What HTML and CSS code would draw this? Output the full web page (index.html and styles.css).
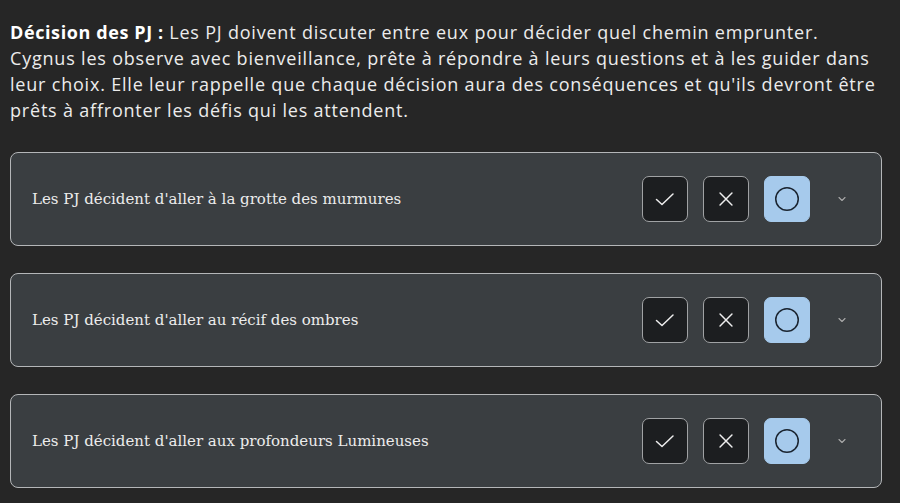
FILE: index.html
```html
<!DOCTYPE html>
<html lang="fr">
<head>
<meta charset="utf-8">
<link rel="stylesheet" href="styles.css">
</head>
<body>
<div class="page">
  <p class="intro"><strong>Décision des PJ :</strong> Les PJ doivent discuter entre eux pour décider quel chemin emprunter. Cygnus les observe avec bienveillance, prête à répondre à leurs questions et à les guider dans leur choix. Elle leur rappelle que chaque décision aura des conséquences et qu'ils devront être prêts à affronter les défis qui les attendent.</p>

  <div class="card">
    <span class="label">Les PJ décident d'aller à la grotte des murmures</span>
    <div class="actions">
      <button class="btn"><svg viewBox="0 0 24 24" width="24" height="24"><path d="M3.5 12.5l5.5 5 11-10.5" fill="none" stroke="#eee" stroke-width="1.5" stroke-linecap="round" stroke-linejoin="round"/></svg></button>
      <button class="btn"><svg viewBox="0 0 24 24" width="22" height="22"><path d="M5.5 5.5l13 13M18.5 5.5l-13 13" fill="none" stroke="#eee" stroke-width="1.6" stroke-linecap="round"/></svg></button>
      <button class="btn active"><svg viewBox="0 0 24 24" width="30" height="30"><circle cx="12" cy="12" r="9" fill="none" stroke="#1a2430" stroke-width="1.2"/></svg></button>
      <span class="chev"><svg viewBox="0 0 12 12" width="12" height="12"><path d="M3 4.5l3 3 3-3" fill="none" stroke="#aaa" stroke-width="1.1" stroke-linecap="round" stroke-linejoin="round"/></svg></span>
    </div>
  </div>

  <div class="card">
    <span class="label">Les PJ décident d'aller au récif des ombres</span>
    <div class="actions">
      <button class="btn"><svg viewBox="0 0 24 24" width="24" height="24"><path d="M3.5 12.5l5.5 5 11-10.5" fill="none" stroke="#eee" stroke-width="1.5" stroke-linecap="round" stroke-linejoin="round"/></svg></button>
      <button class="btn"><svg viewBox="0 0 24 24" width="22" height="22"><path d="M5.5 5.5l13 13M18.5 5.5l-13 13" fill="none" stroke="#eee" stroke-width="1.6" stroke-linecap="round"/></svg></button>
      <button class="btn active"><svg viewBox="0 0 24 24" width="30" height="30"><circle cx="12" cy="12" r="9" fill="none" stroke="#1a2430" stroke-width="1.2"/></svg></button>
      <span class="chev"><svg viewBox="0 0 12 12" width="12" height="12"><path d="M3 4.5l3 3 3-3" fill="none" stroke="#aaa" stroke-width="1.1" stroke-linecap="round" stroke-linejoin="round"/></svg></span>
    </div>
  </div>

  <div class="card">
    <span class="label">Les PJ décident d'aller aux profondeurs Lumineuses</span>
    <div class="actions">
      <button class="btn"><svg viewBox="0 0 24 24" width="24" height="24"><path d="M3.5 12.5l5.5 5 11-10.5" fill="none" stroke="#eee" stroke-width="1.5" stroke-linecap="round" stroke-linejoin="round"/></svg></button>
      <button class="btn"><svg viewBox="0 0 24 24" width="22" height="22"><path d="M5.5 5.5l13 13M18.5 5.5l-13 13" fill="none" stroke="#eee" stroke-width="1.6" stroke-linecap="round"/></svg></button>
      <button class="btn active"><svg viewBox="0 0 24 24" width="30" height="30"><circle cx="12" cy="12" r="9" fill="none" stroke="#1a2430" stroke-width="1.2"/></svg></button>
      <span class="chev"><svg viewBox="0 0 12 12" width="12" height="12"><path d="M3 4.5l3 3 3-3" fill="none" stroke="#aaa" stroke-width="1.1" stroke-linecap="round" stroke-linejoin="round"/></svg></span>
    </div>
  </div>
</div>
</body>
</html>
```

FILE: styles.css
```css
html, body {
  margin: 0;
  padding: 0;
  background: #262626;
}
.page {
  padding: 19px 18px 0 10px;
  width: 872px;
  box-sizing: content-box;
}
.intro {
  margin: 0 0 29px;
  font-family: "Open Sans", sans-serif;
  font-size: 18px;
  letter-spacing: 0.8px;
  line-height: 26px;
  color: #ececec;
}
.intro strong {
  font-weight: 700;
  letter-spacing: 0.6px;
  color: #fff;
}
.card {
  display: flex;
  align-items: center;
  justify-content: space-between;
  height: 92px;
  margin-bottom: 27px;
  padding: 0 33px 0 21px;
  background: #3a3e41;
  border: 1px solid #b4b6b8;
  border-radius: 8px;
}
.label {
  font-family: "DejaVu Serif", serif;
  font-size: 15px;
  color: #ececec;
}
.actions {
  display: flex;
  align-items: center;
  gap: 15px;
}
.btn {
  width: 46px;
  height: 46px;
  padding: 0;
  display: flex;
  align-items: center;
  justify-content: center;
  background: #1c1e20;
  border: 1px solid #a0a2a4;
  border-radius: 7px;
}
.btn.active {
  background: #a6caec;
  border-color: #a6caec;
}
.chev {
  display: flex;
  margin-left: 11px;
}
```
